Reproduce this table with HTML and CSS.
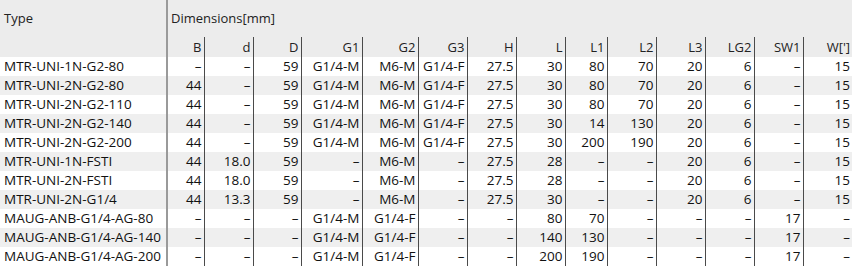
FILE: index.html
```html
<!DOCTYPE html>
<html lang="en">
<head>
    <meta charset="UTF-8">
    <title>Dimensions</title>
    <link rel="stylesheet" href="styles.css">
</head>
<body>
    <table class="dims">
        <colgroup>
            <col class="c-type">
            <col class="c-b">
            <col class="c-n">
            <col class="c-d">
            <col class="c-g1">
            <col class="c-g2">
            <col class="c-n">
            <col class="c-n">
            <col class="c-n">
            <col class="c-l1">
            <col class="c-n">
            <col class="c-n">
            <col class="c-n">
            <col class="c-n">
            <col class="c-n">
        </colgroup>
        <thead>
            <tr class="head-top">
                <th class="type" rowspan="2">Type</th>
                <th class="group" colspan="14">Dimensions[mm]</th>
            </tr>
            <tr class="head-sub">
                <th>B</th><th>d</th><th>D</th><th>G1</th><th>G2</th><th>G3</th><th>H</th>
                <th>L</th><th>L1</th><th>L2</th><th>L3</th><th>LG2</th><th>SW1</th><th class="last">W[']</th>
            </tr>
        </thead>
        <tbody>
            <tr><td class="type">MTR-UNI-1N-G2-80</td><td>–</td><td>–</td><td>59</td><td>G1/4-M</td><td>M6-M</td><td>G1/4-F</td><td>27.5</td><td>30</td><td>80</td><td>70</td><td>20</td><td>6</td><td>–</td><td class="last">15</td></tr>
            <tr><td class="type">MTR-UNI-2N-G2-80</td><td>44</td><td>–</td><td>59</td><td>G1/4-M</td><td>M6-M</td><td>G1/4-F</td><td>27.5</td><td>30</td><td>80</td><td>70</td><td>20</td><td>6</td><td>–</td><td class="last">15</td></tr>
            <tr><td class="type">MTR-UNI-2N-G2-110</td><td>44</td><td>–</td><td>59</td><td>G1/4-M</td><td>M6-M</td><td>G1/4-F</td><td>27.5</td><td>30</td><td>80</td><td>70</td><td>20</td><td>6</td><td>–</td><td class="last">15</td></tr>
            <tr><td class="type">MTR-UNI-2N-G2-140</td><td>44</td><td>–</td><td>59</td><td>G1/4-M</td><td>M6-M</td><td>G1/4-F</td><td>27.5</td><td>30</td><td>14</td><td>130</td><td>20</td><td>6</td><td>–</td><td class="last">15</td></tr>
            <tr><td class="type">MTR-UNI-2N-G2-200</td><td>44</td><td>–</td><td>59</td><td>G1/4-M</td><td>M6-M</td><td>G1/4-F</td><td>27.5</td><td>30</td><td>200</td><td>190</td><td>20</td><td>6</td><td>–</td><td class="last">15</td></tr>
            <tr><td class="type">MTR-UNI-1N-FSTI</td><td>44</td><td>18.0</td><td>59</td><td>–</td><td>M6-M</td><td>–</td><td>27.5</td><td>28</td><td>–</td><td>–</td><td>20</td><td>6</td><td>–</td><td class="last">15</td></tr>
            <tr><td class="type">MTR-UNI-2N-FSTI</td><td>44</td><td>18.0</td><td>59</td><td>–</td><td>M6-M</td><td>–</td><td>27.5</td><td>28</td><td>–</td><td>–</td><td>20</td><td>6</td><td>–</td><td class="last">15</td></tr>
            <tr><td class="type">MTR-UNI-2N-G1/4</td><td>44</td><td>13.3</td><td>59</td><td>–</td><td>M6-M</td><td>–</td><td>27.5</td><td>30</td><td>–</td><td>–</td><td>20</td><td>6</td><td>–</td><td class="last">15</td></tr>
            <tr><td class="type">MAUG-ANB-G1/4-AG-80</td><td>–</td><td>–</td><td>–</td><td>G1/4-M</td><td>G1/4-F</td><td>–</td><td>–</td><td>80</td><td>70</td><td>–</td><td>–</td><td>–</td><td>17</td><td class="last">–</td></tr>
            <tr><td class="type">MAUG-ANB-G1/4-AG-140</td><td>–</td><td>–</td><td>–</td><td>G1/4-M</td><td>G1/4-F</td><td>–</td><td>–</td><td>140</td><td>130</td><td>–</td><td>–</td><td>–</td><td>17</td><td class="last">–</td></tr>
            <tr><td class="type">MAUG-ANB-G1/4-AG-200</td><td>–</td><td>–</td><td>–</td><td>G1/4-M</td><td>G1/4-F</td><td>–</td><td>–</td><td>200</td><td>190</td><td>–</td><td>–</td><td>–</td><td>17</td><td class="last">–</td></tr>
        </tbody>
    </table>
</body>
</html>
```

FILE: styles.css
```css
body {
    margin: 0;
    background-color: #fff;
    font-family: "Open Sans", "Noto Sans", sans-serif;
    font-size: 13.5px;
    color: #111;
}

.dims {
    table-layout: fixed;
    border-collapse: collapse;
    width: 852px;
}

.c-type { width: 167px; }
.c-b { width: 37px; }
.c-n { width: 49px; }
.c-d { width: 48px; }
.c-g1 { width: 61px; }
.c-g2 { width: 56px; }
.c-l1 { width: 42px; }

.dims th,
.dims td {
    padding: 0 2px 0 0;
    text-align: right;
    white-space: nowrap;
    overflow: hidden;
    font-weight: normal;
    line-height: 19px;
    height: 19px;
    border-right: 1px solid #4a4a4a;
}

.dims thead th {
    background-color: #ececec;
    color: #222;
    font-size: 13px;
}

.head-top th {
    height: 37px;
    line-height: 37px;
    border-right: none;
}

.head-sub th {
    height: 18px;
    line-height: 20px;
    font-size: 13.5px;
}

.dims .type {
    text-align: left;
    padding-left: 4px;
    border-right: 2px solid #9a9a9a;
}

.dims thead .type {
    vertical-align: top;
    line-height: 36px;
}

.dims .group {
    text-align: left;
    padding-left: 3px;
}

.dims .last {
    border-right: none;
}

.dims tbody tr:nth-child(even) td {
    background-color: #efefef;
}
```
